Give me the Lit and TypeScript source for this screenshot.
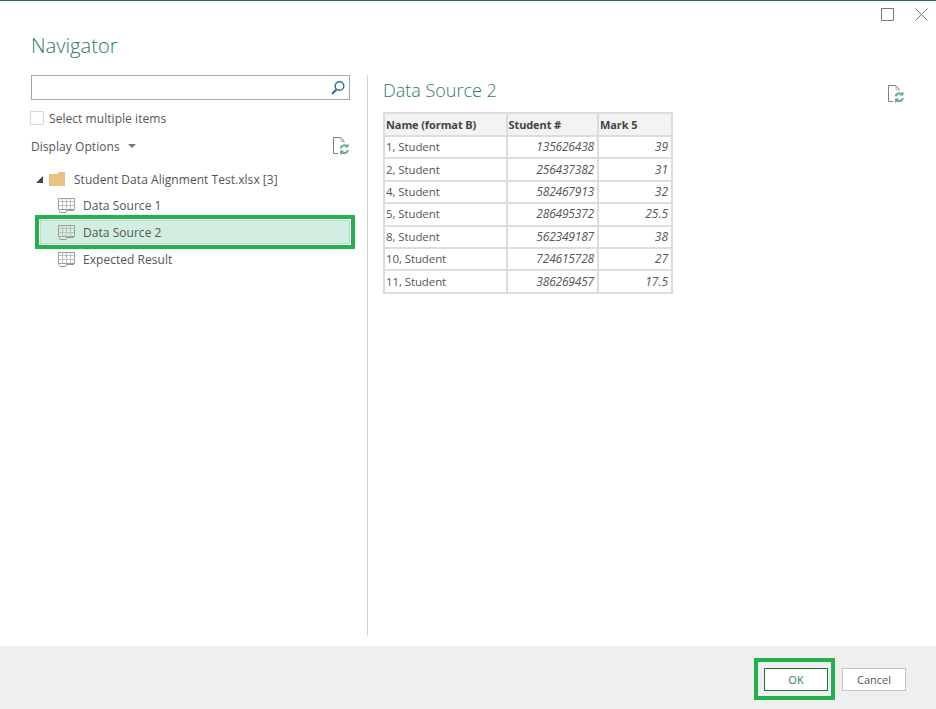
import { LitElement, html, css, svg } from "lit";
import { customElement } from "lit/decorators.js";

const refreshIcon = html`<svg class="refresh" width="18" height="18" viewBox="0 0 18 18" fill="none">
  <path d="M12 5.5V4L9 .5H1.500V16.500H6" stroke="#808080" stroke-width="1"/>
  <path d="M9 .5V4.500H12" stroke="#b5b5b5" stroke-width="1"/>
  <path d="M8.500 11.500a4.200 4.200 0 0 1 7-2" stroke="#66ad8b" stroke-width="2"/>
  <path d="M16.500 6.500v4h-4z" fill="#66ad8b"/>
  <path d="M16 13a4.200 4.200 0 0 1-7 2" stroke="#66ad8b" stroke-width="2"/>
  <path d="M8 18v-4.500h4.500z" fill="#66ad8b"/>
</svg>`;

const tableIcon = svg`<svg class="ticon" width="17" height="15" viewBox="0 0 17 15" fill="none" stroke-width="1">
  <path d="M.5.500H16.500V11.500H.5Z" stroke="#9a9a9a"/>
  <path d="M.5 3.500H16.500M.5 7.500H16.500M4.500.5V11.500M8.500.5V11.500M12.500.5V11.500" stroke="#bdbdbd"/>
  <path d="M1 12.500Q1 14.500 3 14.500H7Q8.500 14.500 8.500 12.500H16" stroke="#9a9a9a"/>
</svg>`;

const rows: [string, string, string][] = [
  ["1, Student", "135626438", "39"],
  ["2, Student", "256437382", "31"],
  ["4, Student", "582467913", "32"],
  ["5, Student", "286495372", "25.5"],
  ["8, Student", "562349187", "38"],
  ["10, Student", "724615728", "27"],
  ["11, Student", "386269457", "17.5"],
];

@customElement("app-root")
export class AppRoot extends LitElement {
  static styles = css`
    :host {
      display: flex;
      flex-direction: column;
      width: 936px;
      height: 709px;
      overflow: hidden;
      background: #fff;
      font-family: "Open Sans", "Liberation Sans", sans-serif;
      font-size: 12px;
      color: #444;
      box-sizing: border-box;
      border-top: 1px solid #217346;
    }
    .chrome {
      display: flex;
      justify-content: flex-end;
      align-items: center;
      gap: 21px;
      height: 26px;
      padding-right: 8px;
      flex: none;
    }
    .title {
      margin: 5px 0 0 31px;
      height: 43px;
      flex: none;
      font-size: 20.200px;
      font-weight: 300;
      line-height: 26px;
      color: #2f7d5b;
    }
    .main {
      flex: 1;
      min-height: 0;
      display: grid;
      grid-template-columns: 336px 1px 1fr;
      margin-left: 31px;
      padding-bottom: 10px;
    }
    .left { display: flex; flex-direction: column; }
    .search {
      box-sizing: border-box;
      width: 319px;
      height: 25px;
      border: 1px solid #a6a6a6;
      display: flex;
      justify-content: flex-end;
      align-items: center;
      padding-right: 3px;
      flex: none;
    }
    .check-row {
      display: flex;
      align-items: center;
      gap: 5px;
      height: 18px;
      margin: 9px 0 0 -1px;
      color: #555;
      letter-spacing: 0.05px;
    }
    .check {
      box-sizing: border-box;
      width: 14px;
      height: 14px;
      border: 1px solid #d6d6d6;
      border-radius: 1px;
    }
    .opts {
      display: flex;
      align-items: center;
      width: 319px;
      height: 20px;
      margin-top: 9px;
      color: #555;
      letter-spacing: 0.05px;
    }
    .caret {
      width: 0;
      height: 0;
      margin-left: 8px;
      border-left: 4px solid transparent;
      border-right: 4px solid transparent;
      border-top: 4px solid #777;
    }
    .opts .refresh { margin-left: auto; }
    .tree { display: flex; flex-direction: column; margin-top: 10px; }
    .root {
      display: flex;
      align-items: center;
      height: 26px;
      padding-left: 5px;
      letter-spacing: 0.04px;
      color: #555;
    }
    .tri {
      width: 0;
      height: 0;
      border-left: 7px solid transparent;
      border-bottom: 7px solid #444;
      margin-right: 6px;
    }
    .folder { margin-right: 9px; }
    .item {
      display: flex;
      align-items: center;
      gap: 8px;
      box-sizing: border-box;
      height: 27px;
      padding-left: 27px;
      width: 320px;
      color: #555;
      letter-spacing: 0.04px;
    }
    .item:first-of-type { height: 26px; }
    .item.sel {
      background: #d2eee0;
      border: 1px solid #fff;
      outline: 4px solid #22b14c;
      width: 312px;
      height: 26px;
      margin: 0 0 1px 8px;
      padding-left: 18px;
      box-shadow: inset 0 0 0 1px #b5dcc8;
    }
    .divider { background: #d4d4d4; }
    .right {
      padding-left: 15px;
      display: flex;
      flex-direction: column;
    }
    .head { display: flex; justify-content: space-between; height: 37px; }
    .head h2 {
      margin: 0;
      font-size: 18px;
      line-height: 30px;
      font-weight: 300;
      color: #2f7d5b;
    }
    .head .refresh { margin: 10px 31px 0 0; }
    table {
      border-collapse: collapse;
      table-layout: fixed;
      width: 288px;
      font-size: 11.500px;
      color: #555;
      letter-spacing: -0.1px;
    }
    .c1 { width: 122.500px; }
    .c2 { width: 91.500px; }
    .c3 { width: 74px; }
    th, td {
      border: 2px solid #dcdcdc;
      padding: 0 3px 0 1px;
      height: 22.400px;
      line-height: 14px;
      box-sizing: border-box;
      white-space: nowrap;
    }
    th {
      height: 23px;
      text-align: left;
      background: #f3f3f3;
      font-size: 11px;
      font-weight: 700;
      color: #444;
    }
    td.num { text-align: right; font-style: italic; font-size: 12px; letter-spacing: -0.2px; }
    td.num.mark { letter-spacing: 0; }
    .footer {
      flex: none;
      height: 63px;
      background: #efefef;
      display: flex;
      justify-content: flex-end;
      align-items: flex-start;
      gap: 7px;
      padding: 12px 30px 0 0;
      box-sizing: border-box;
    }
    .mark-box {
      display: block;
      border: 4px solid #22b14c;
      padding: 6px 3px 5px 6px;
    }
    button {
      display: block;
      box-sizing: border-box;
      font: inherit;
      font-size: 11px;
      width: 64px;
      height: 23px;
      background: #fff;
      border: 1px solid #c4c4c4;
      color: #555;
      padding: 0;
    }
    button.ok {
      border: 1px solid #217346;
      color: #2f7d5b;
    }
    button.cancel { margin-top: 10px; }
  `;

  render() {
    return html`
      <div class="chrome">
        <svg width="13" height="13" viewBox="0 0 13 13" fill="none" stroke="#777"><path d="M.5.500H12.500V12.500H.5Z" /></svg>
        <svg width="13" height="13" viewBox="0 0 13 13" fill="none" stroke="#777"><path d="M.5.5L12.500 12.500M12.500.5L.5 12.500" /></svg>
      </div>
      <div class="title">Navigator</div>
      <div class="main">
        <div class="left">
          <div class="search">
            <svg width="16" height="16" viewBox="0 0 16 16" fill="none">
              <circle cx="9.500" cy="6" r="4.300" stroke="#2f6ea8" stroke-width="1.500"/>
              <path d="M6.500 9.500L2 14" stroke="#2f6ea8" stroke-width="2.200"/>
            </svg>
          </div>
          <label class="check-row"><span class="check"></span>Select multiple items</label>
          <div class="opts">Display Options<span class="caret"></span>${refreshIcon}</div>
          <div class="tree">
            <div class="root">
              <span class="tri"></span>
              <svg class="folder" width="16" height="14" viewBox="0 0 16 14"><path d="M0 2H8L10 0H16V14H0Z" fill="#e8c27e"/></svg>
              Student Data Alignment Test.xlsx [3]
            </div>
            <div class="item">${tableIcon}Data Source 1</div>
            <div class="item sel">${tableIcon}Data Source 2</div>
            <div class="item">${tableIcon}Expected Result</div>
          </div>
        </div>
        <div class="divider"></div>
        <div class="right">
          <div class="head"><h2>Data Source 2</h2>${refreshIcon}</div>
          <table>
            <colgroup><col class="c1"/><col class="c2"/><col class="c3"/></colgroup>
            <thead><tr><th>Name (format B)</th><th>Student #</th><th>Mark 5</th></tr></thead>
            <tbody>
              ${rows.map(r => html`<tr><td>${r[0]}</td><td class="num">${r[1]}</td><td class="num mark">${r[2]}</td></tr>`)}
            </tbody>
          </table>
        </div>
      </div>
      <div class="footer">
        <span class="mark-box"><button class="ok">OK</button></span>
        <button class="cancel">Cancel</button>
      </div>
    `;
  }
}
